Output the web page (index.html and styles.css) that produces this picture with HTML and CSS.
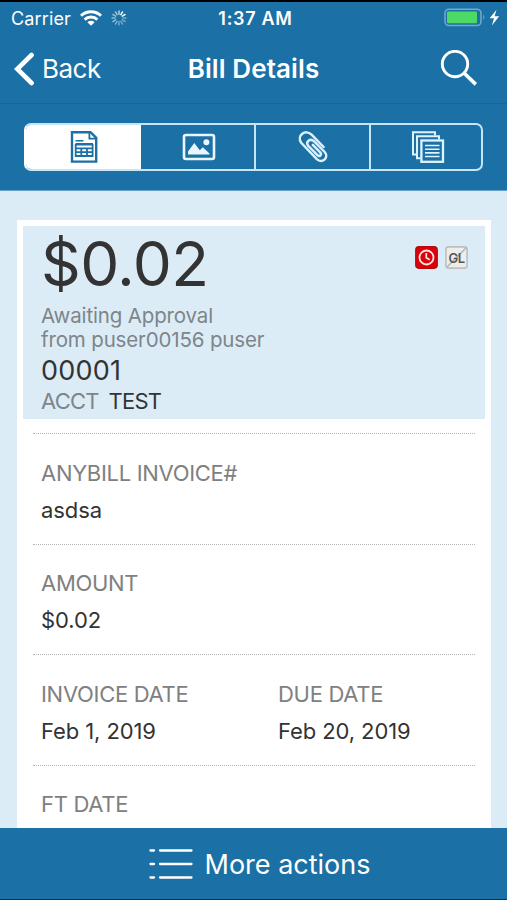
FILE: index.html
```html
<!DOCTYPE html>
<html lang="en">
<head>
  <meta charset="UTF-8" />
  <title>Bill Details</title>
  <meta name="viewport" content="width=device-width, initial-scale=1" />
  <link rel="stylesheet" href="styles.css">
</head>
<body>
  <header class="header">
    <div class="statusbar">
      <div class="carrier">
        <span class="carrier-name">Carrier</span>
        <svg class="wifi" width="22" height="16" viewBox="0 0 22 16" fill="none" stroke="#fff" stroke-width="2.9">
          <path d="M1 5.8a14.3 14.3 0 0 1 20 0" />
          <path d="M4.6 9.6a9.2 9.2 0 0 1 12.8 0" />
          <path d="M7.4 12.3a5.2 5.2 0 0 1 7.2 0L11 15.8z" fill="#fff" stroke="none" />
        </svg>
        <svg class="spinner" width="16" height="16" viewBox="-8 -8 16 16" stroke="#fff" stroke-width="1.5" stroke-linecap="round">
          <path d="M0-3.8V-7" opacity=".7" />
          <path d="M0-3.8V-7" transform="rotate(30)" />
          <path d="M0-3.8V-7" transform="rotate(60)" opacity=".95" />
          <path d="M0-3.8V-7" transform="rotate(90)" opacity=".4" />
          <path d="M0-3.8V-7" transform="rotate(120)" opacity=".4" />
          <path d="M0-3.8V-7" transform="rotate(150)" opacity=".4" />
          <path d="M0-3.8V-7" transform="rotate(180)" opacity=".4" />
          <path d="M0-3.8V-7" transform="rotate(210)" opacity=".45" />
          <path d="M0-3.8V-7" transform="rotate(240)" opacity=".5" />
          <path d="M0-3.8V-7" transform="rotate(270)" opacity=".5" />
          <path d="M0-3.8V-7" transform="rotate(300)" opacity=".55" />
          <path d="M0-3.8V-7" transform="rotate(330)" opacity=".6" />
        </svg>
      </div>
      <div class="clock">1:37 AM</div>
      <svg class="battery" width="56" height="20" viewBox="0 0 56 20">
        <rect x="1" y="1.2" width="36" height="16.4" rx="4" fill="none" stroke="#75a9cc" stroke-width="1.5" />
        <rect x="3" y="3.6" width="30" height="11.6" rx="1" fill="#4cd964" />
        <path d="M39.3 6.5q2.2 2.8 0 5.6z" fill="#75a9cc" />
        <path d="M52.5 1.7L45.6 10.2H50L47.9 17.4L55.2 8.2H50.6z" fill="#fff" />
      </svg>
    </div>

    <nav class="navbar">
      <a class="back">
        <svg width="20" height="34" viewBox="0 0 20 34" fill="none" stroke="#fff" stroke-width="4.6" stroke-linecap="round">
          <path d="M17.6 3L3.2 17L17.6 31" />
        </svg>
        <span>Back</span>
      </a>
      <h1 class="title">Bill Details</h1>
      <svg class="search" width="38" height="38" viewBox="0 0 38 38" fill="none" stroke="#fff">
        <circle cx="15" cy="14" r="12.7" stroke-width="2.9" />
        <path d="M24 23L35.8 34.4" stroke-width="3.6" />
      </svg>
    </nav>

    <div class="tabs">
      <div class="tab active">
        <svg width="28" height="34" viewBox="0 0 28 34" fill="none" stroke="#1b70a5">
          <path d="M2 2.2H20.5L26.2 7.8V31.6H2z" stroke-width="2.4" />
          <path d="M19.4 2V8.6H26.2" stroke-width="1.8" />
          <path d="M5.5 10.7H13.5" stroke-width="1.6" />
          <path d="M5.5 13.8H23M5.5 14.8H23" stroke-width="1.4" />
          <path d="M5.7 14V26H22.6V14M5.5 18.3H22.8M5.5 22.2H22.8M5.5 26H22.8M11.3 18.3V26.5M17 18.3V26.5" stroke-width="1.8" />
        </svg>
      </div>
      <div class="tab">
        <svg width="34" height="28" viewBox="0 0 34 28" fill="none" stroke="#eaf6ff">
          <rect x="2" y="2" width="30" height="24" rx="2" stroke-width="2.6" />
          <circle cx="24.4" cy="9.3" r="3" fill="#eaf6ff" stroke="none" />
          <path d="M6 21.5V18.5L12.3 10L17.8 17.2L20.8 14.2L27.5 20.5V21.5z" fill="#eaf6ff" stroke="none" />
        </svg>
      </div>
      <div class="tab">
        <svg width="32" height="34" viewBox="0 0 32 34" fill="none" stroke="#d9f0fd" stroke-width="2.5" stroke-linecap="round">
          <path d="M26.6 17L14.6 4.6C8.4-1.3 -.6 5.6 4.2 12.8L19.8 29.2C25 34 32.2 27.8 27.9 22.2L17.2 11.4C13 7.8 8.2 11.8 11.2 15.8L20.4 25.2C22.6 27.2 25 24.8 23.4 22.6L15.8 14.8" />
        </svg>
      </div>
      <div class="tab tab-last">
        <svg width="34" height="34" viewBox="0 0 34 34" fill="none" stroke="#dff3ff" stroke-width="2">
          <path d="M5 24.5H2V2.2H24V5.3" />
          <path d="M9.4 28.3H6V6.3H28V9.5" />
          <rect x="10.4" y="10.5" width="21.6" height="21.3" stroke-width="2.3" />
          <path d="M14 15.5H28.5M14 19.2H28.5M14 22.9H28.5M14 26.5H28.5" stroke-width="1.6" />
        </svg>
      </div>
    </div>
  </header>

  <main class="content">
    <section class="card">
      <div class="summary">
        <div class="summary-top">
          <div class="total">$0.02</div>
          <div class="badges">
            <svg width="23" height="23" viewBox="0 0 23 23" fill="none">
              <rect x=".7" y=".7" width="21.6" height="21.6" rx="3.2" fill="#d9020b" stroke="#b40b13" stroke-width="1.2" />
              <circle cx="11.5" cy="11.5" r="7" stroke="#ffe3e3" stroke-width="1.8" />
              <path d="M11.3 7V11.7L14.7 13.8" stroke="#ffe3e3" stroke-width="1.7" />
            </svg>
            <svg width="23" height="23" viewBox="0 0 23 23">
              <rect x=".9" y=".9" width="21.2" height="21.2" rx="2.5" fill="#ededeb" stroke="#bcc0c1" stroke-width="1.6" />
              <path d="M2 21L21 2" stroke="#b4b7b8" stroke-width="1.5" />
              <text class="gl" x="11.5" y="16.8" text-anchor="middle">GL</text>
            </svg>
          </div>
        </div>
        <div class="state">Awaiting Approval<br>from puser00156 puser</div>
        <div class="number">00001</div>
        <div class="account"><span class="account-label">ACCT</span><span class="account-name">TEST</span></div>
      </div>

      <div class="fields">
        <div class="row">
          <div class="field">
            <div class="label">ANYBILL INVOICE#</div>
            <div class="value">asdsa</div>
          </div>
        </div>
        <div class="row">
          <div class="field">
            <div class="label">AMOUNT</div>
            <div class="value">$0.02</div>
          </div>
        </div>
        <div class="row">
          <div class="field">
            <div class="label">INVOICE DATE</div>
            <div class="value">Feb 1, 2019</div>
          </div>
          <div class="field">
            <div class="label">DUE DATE</div>
            <div class="value">Feb 20, 2019</div>
          </div>
        </div>
        <div class="row">
          <div class="field">
            <div class="label">FT DATE</div>
          </div>
        </div>
      </div>
    </section>
  </main>

  <footer class="more">
    <svg width="44" height="32" viewBox="0 0 44 32" stroke="#fff" stroke-width="2.3" stroke-linecap="round">
      <path d="M1.5 2.5H5M11 2.5H42.5M1.5 16H5M11 16H42.5M1.5 29.5H5M11 29.5H42.5" />
    </svg>
    <span>More actions</span>
  </footer>
</body>
</html>
```
FILE: styles.css
```css
* {
  box-sizing: border-box;
}
body {
  margin: 0;
  height: 900px;
  display: flex;
  flex-direction: column;
  overflow: hidden;
  background: #dcecf6;
  border-top: 2px solid #000;
  border-bottom: 1px solid #06334f;
  font-family: Inter, "Liberation Sans", sans-serif;
  color: #333;
}
svg {
  display: block;
  flex: none;
}

/* header */
.header {
  flex: none;
  height: 189px;
  background: #1b70a5;
  border-bottom: 1px solid #66a2c8;
  color: #fff;
}
.statusbar {
  height: 32px;
  display: grid;
  grid-template-columns: 1fr auto 1fr;
  align-items: center;
  padding: 0 7px 0 11px;
  font-size: 18px;
}
.carrier {
  display: flex;
  align-items: center;
}
.carrier-name {
  letter-spacing: 0.15px;
}
.wifi {
  margin-left: 9px;
}
.spinner {
  margin-left: 9px;
}
.clock {
  font-weight: 600;
  letter-spacing: 0.7px;
}
.battery {
  justify-self: end;
}
.navbar {
  height: 70px;
  display: grid;
  grid-template-columns: 1fr auto 1fr;
  align-items: center;
  padding: 0 14px;
  border-bottom: 1px solid #186797;
  font-size: 26px;
}
.back {
  display: flex;
  align-items: center;
  gap: 8px;
  letter-spacing: -0.5px;
}
.title {
  margin: 0;
  font-size: 26px;
  font-weight: 600;
  letter-spacing: 0.1px;
}
.search {
  justify-self: end;
  margin-right: 15px;
}
.tabs {
  display: grid;
  grid-template-columns: 115px 113px 115px 1fr;
  height: 48px;
  margin: 19px 24px 0;
  border: 2px solid #c5e6f8;
  border-left-color: #fff;
  border-radius: 7px;
  overflow: hidden;
}
.tab {
  display: flex;
  align-items: center;
  justify-content: center;
}
.tab + .tab {
  border-left: 2px solid #c5e6f8;
}
.tab.active {
  background: #fff;
}
.tab.active + .tab {
  border-left-color: transparent;
}
.tab-last {
  padding-left: 4px;
}

/* bill card */
.content {
  flex: 1;
  min-height: 0;
  padding: 29px 16px 0 16.5px;
  overflow: hidden;
}
.card {
  height: 700px;
  padding: 6px 6px 0 6.5px;
  background: #fff;
}
.summary {
  height: 193px;
  padding: 0 17px 0 18px;
  background: #dcecf6;
}
.summary-top {
  display: flex;
  justify-content: space-between;
}
.total {
  font-size: 62px;
  line-height: 75px;
  letter-spacing: -0.6px;
}
.badges {
  display: flex;
  gap: 7px;
  padding-top: 20px;
}
.gl {
  font-size: 13px;
  font-weight: 600;
  letter-spacing: -0.5px;
  fill: #555;
}
.state {
  margin-top: 3px;
  font-size: 20.5px;
  line-height: 24px;
  letter-spacing: -0.15px;
  color: #7d858a;
}
.number {
  margin-top: 3px;
  font-size: 27px;
  line-height: 32px;
  letter-spacing: 0.2px;
}
.account {
  display: flex;
  gap: 10px;
  font-size: 22px;
  line-height: 29px;
  letter-spacing: -0.8px;
}
.account-label {
  color: #7d858a;
}

/* field rows */
.fields {
  padding: 14px 10.5px 0 10px;
}
.row {
  display: grid;
  grid-template-columns: 237px 1fr;
  height: 110.6px;
  padding: 20.6px 0 0 8px;
  border-top: 1px dotted #b4b4b4;
  font-size: 22px;
  line-height: 37px;
}
.label {
  color: #808080;
  letter-spacing: -0.3px;
}
.value {
  letter-spacing: -0.1px;
}

/* bottom bar */
.more {
  flex: none;
  height: 71px;
  display: flex;
  align-items: center;
  justify-content: center;
  gap: 12px;
  padding: 1px 0 0 12px;
  background: #1b70a5;
  color: #fff;
  font-size: 27px;
}
```
